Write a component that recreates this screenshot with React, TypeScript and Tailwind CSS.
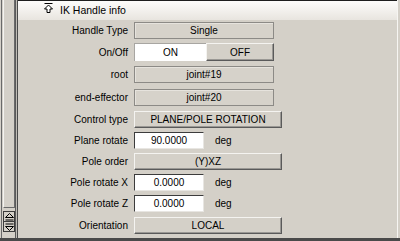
import type { ReactNode } from 'react'

type Row = {
  label: string
  top: string
  control: ReactNode
}

function Field({ text }: { text: string }) {
  return (
    <div className="w-[140px] h-[17px] flex items-center justify-center border border-[#8c8a86] bg-[#d6d2ca] shadow-[inset_1px_1px_0_#e6e3dd]">
      {text}
    </div>
  )
}

function OptionButton({ text }: { text: string }) {
  return (
    <div className="w-[148px] h-[17px] flex items-center justify-center border border-t-[#f4f3f0] border-l-[#f4f3f0] border-b-[#5a5a5a] border-r-[#5a5a5a] bg-[#d4d0c8] shadow-[inset_-1px_-1px_0_#9a9894]">
      {text}
    </div>
  )
}

function NumberInput({ value }: { value: string }) {
  return (
    <div className="flex items-center">
      <div className="w-[70px] h-[17px] flex items-center justify-center bg-white border border-t-[#3c3c3c] border-l-[#3c3c3c] border-b-[#e8e6e2] border-r-[#e8e6e2]">
        {value}
      </div>
      <span className="ml-[11px]">deg</span>
    </div>
  )
}

function OnOff() {
  return (
    <div className="flex h-[18px]">
      <div className="w-[72px] flex items-center justify-center bg-white border-t border-l border-[#a8a6a2]">
        ON
      </div>
      <div className="w-[68px] flex items-center justify-center border border-t-[#f4f3f0] border-l-[#f4f3f0] border-b-[#5a5a5a] border-r-[#5a5a5a] shadow-[inset_-1px_-1px_0_#9a9894]">
        OFF
      </div>
    </div>
  )
}

const ROWS: Row[] = [
  { label: 'Handle Type', top: 'mt-[2px]', control: <Field text="Single" /> },
  { label: 'On/Off', top: 'mt-[4px]', control: <OnOff /> },
  { label: 'root', top: 'mt-[5px]', control: <Field text="joint#19" /> },
  { label: 'end-effector', top: 'mt-[6px]', control: <Field text="joint#20" /> },
  { label: 'Control type', top: 'mt-[5px]', control: <OptionButton text="PLANE/POLE ROTATION" /> },
  { label: 'Plane rotate', top: 'mt-[4px]', control: <NumberInput value="90.0000" /> },
  { label: 'Pole order', top: 'mt-[4px]', control: <OptionButton text="(Y)XZ" /> },
  { label: 'Pole rotate X', top: 'mt-[4px]', control: <NumberInput value="0.0000" /> },
  { label: 'Pole rotate Z', top: 'mt-[4px]', control: <NumberInput value="0.0000" /> },
  { label: 'Orientation', top: 'mt-[5px]', control: <OptionButton text="LOCAL" /> },
]

function LeftStrip() {
  return (
    <div className="w-[17px] flex flex-col bg-[#d4d0c8] border-l border-[#6a6a6a] ml-[1px]">
      <div className="flex flex-1 min-h-0">
        <div className="flex-1 flex flex-col pl-[1px]">
          {/* track */}
          <div className="flex-1 border border-t-0 border-l-[#f4f3f0] border-r-[#6a6a6a] border-b-[#6a6a6a]" />
          {/* arrows */}
          <div className="mt-[3px] mb-[6px] h-[21px] flex flex-col border border-[#3c3c3c] bg-[#d4d0c8]">
            <div className="flex-1 flex items-center justify-center border-b border-[#3c3c3c]">
              <svg width="9" height="8" viewBox="0 0 9 8">
                <path d="M4.5 0.5 L8.5 4.5 H0.5 Z" fill="none" stroke="#000" strokeWidth="1" />
                <path d="M0.5 7 H8.5" stroke="#000" strokeWidth="1" />
              </svg>
            </div>
            <div className="flex-1 flex items-center justify-center">
              <svg width="9" height="8" viewBox="0 0 9 8">
                <path d="M0.5 1 H8.5" stroke="#000" strokeWidth="1" />
                <path d="M0.5 3.5 H8.5 L4.5 7.5 Z" fill="none" stroke="#000" strokeWidth="1" />
              </svg>
            </div>
          </div>
        </div>
        <div className="w-[3px] flex">
          <div className="w-px bg-[#5a5a5a]" />
          <div className="w-px bg-[#c0bdb6]" />
          <div className="w-px bg-[#4a4a4a]" />
        </div>
      </div>
    </div>
  )
}

export default function App() {
  return (
    <div className="w-[400px] h-[241px] bg-[#d4d0c8] flex flex-col overflow-hidden font-['Liberation_Sans',Arial,sans-serif] text-[10px] text-black">
      <div className="flex flex-1 min-h-0">
        <LeftStrip />
        <div className="flex-1 flex flex-col border-r border-[#f6f5f2] mr-[2px]">
          {/* Header */}
          <div className="h-[20px] border-t border-[#1e1e1e] bg-gradient-to-b from-[#fdfcfb] to-[#e8e5df] flex items-center pl-[26px] shrink-0">
            <svg width="9" height="10" viewBox="0 0 9 10" className="mt-[-6px]">
              <path d="M0.5 0.5 H8.5" stroke="#000" strokeWidth="1" />
              <path d="M4.5 2 L8.5 6 H6 V9.5 H3 V6 H0.5 Z" fill="#fff" stroke="#000" strokeWidth="1" strokeLinejoin="miter" />
            </svg>
            <span className="ml-[7px] text-[10.5px]">IK Handle info</span>
          </div>

          {/* Body */}
          <div className="flex flex-col">
            {ROWS.map((r) => (
              <div key={r.label} className={`flex items-center ${r.top}`}>
                <div className="w-[110px] text-right">{r.label}</div>
                <div className="ml-[6px]">{r.control}</div>
              </div>
            ))}
          </div>
        </div>
      </div>
      <div className="h-[3px] bg-[#4a4a4a] shrink-0" />
    </div>
  )
}
